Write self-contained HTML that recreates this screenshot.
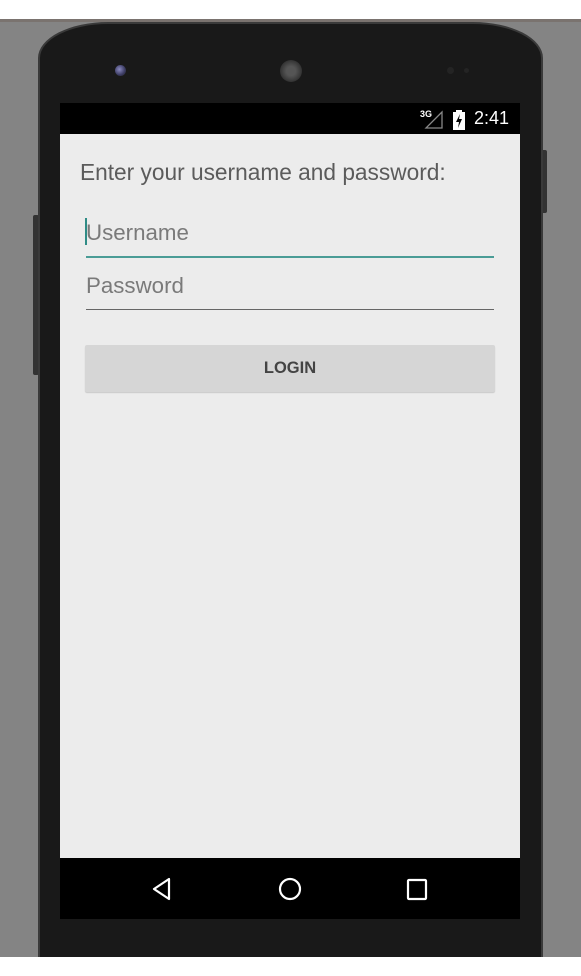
<!DOCTYPE html>
<html><head><style>
body{margin:0;width:581px;height:976px;background:#fff;position:relative;overflow:hidden;font-family:"Liberation Sans",sans-serif}
.bg{position:absolute;left:0;top:19px;width:581px;height:938px;background:#848484}
.bg:before{content:"";position:absolute;left:0;top:0;right:0;height:3px;background:#7a736f}
.phone{position:absolute;left:38px;top:22px;width:505px;height:950px;background:#191919;border:2px solid #3a3a3a;border-radius:70px 70px 0 0/36px 36px 0 0;box-sizing:border-box}
.btnl{position:absolute;left:33px;top:215px;width:6px;height:160px;background:#333;border-radius:2px}
.btnr{position:absolute;left:541px;top:150px;width:6px;height:63px;background:#333;border-radius:2px}
.white{position:absolute;left:0;top:957px;width:581px;height:19px;background:#fff}
.status{position:absolute;left:60px;top:103px;width:460px;height:31px;background:#000}
.screen{position:absolute;left:60px;top:134px;width:460px;height:724px;background:#ececec}
.nav{position:absolute;left:60px;top:858px;width:460px;height:61px;background:#000}
.t{position:absolute;color:#5b5b5b}
</style></head><body>
<div class="bg"></div>
<div class="btnl"></div><div class="btnr"></div>
<div class="phone"></div>
<div class="white"></div>
<div style="position:absolute;left:115px;top:65px;width:11px;height:11px;border-radius:50%;background:radial-gradient(circle at 40% 40%,#8a8ac0,#3a3a60 60%,#222)"></div>
<div style="position:absolute;left:280px;top:60px;width:22px;height:22px;border-radius:50%;background:radial-gradient(#555 30%,#333 70%)"></div>
<div style="position:absolute;left:447px;top:67px;width:7px;height:7px;border-radius:50%;background:#242424"></div>
<div style="position:absolute;left:464px;top:68px;width:5px;height:5px;border-radius:50%;background:#242424"></div>
<div class="status">
<span style="position:absolute;left:360px;top:6px;color:#fff;font-size:9px;font-weight:bold">3G</span>
<svg style="position:absolute;left:364px;top:7px" width="20" height="20"><path d="M18 2L2 18H18Z" fill="none" stroke="#888" stroke-width="1.3"/></svg>
<svg style="position:absolute;left:393px;top:7px" width="12" height="20"><rect x="3" y="0" width="6" height="2" fill="#fff"/><rect x="0" y="2" width="12" height="18" fill="#fff"/><path d="M7 4L3 12H6L5 18L9 9H6Z" fill="#000"/></svg>
<span style="position:absolute;left:414px;top:5px;color:#fff;font-size:18px">2:41</span>
</div>
<div class="screen">
<div class="t" style="left:20px;top:25px;font-size:22.7px">Enter your username and password:</div>
<div style="position:absolute;left:25px;top:84px;width:2px;height:27px;background:#2f8c86"></div>
<div class="t" style="left:26px;top:86px;font-size:22.3px;color:#7a7a7a">Username</div>
<div style="position:absolute;left:26px;top:122px;width:408px;height:2px;background:#4a9c96"></div>
<div class="t" style="left:26px;top:139px;font-size:22.3px;color:#7a7a7a">Password</div>
<div style="position:absolute;left:26px;top:175px;width:408px;height:1px;background:#666"></div>
<div style="position:absolute;left:25px;top:211px;width:410px;height:47px;background:#d6d6d6;border-radius:2px;box-shadow:0 1px 1px rgba(0,0,0,.15);text-align:center;line-height:47px;font-size:16.5px;font-weight:bold;color:#444">LOGIN</div>
</div>
<div class="nav">
<svg style="position:absolute;left:90px;top:18px" width="26" height="28"><path d="M19 3L4 13L19 23Z" fill="none" stroke="#fff" stroke-width="2.2" stroke-linejoin="round"/></svg>
<svg style="position:absolute;left:216px;top:17px" width="28" height="28"><circle cx="14" cy="14" r="10" fill="none" stroke="#fff" stroke-width="2.2"/></svg>
<svg style="position:absolute;left:345px;top:20px" width="24" height="24"><rect x="3" y="2" width="18" height="19" rx="1" fill="none" stroke="#fff" stroke-width="2.2"/></svg>
</div>
</body></html>
